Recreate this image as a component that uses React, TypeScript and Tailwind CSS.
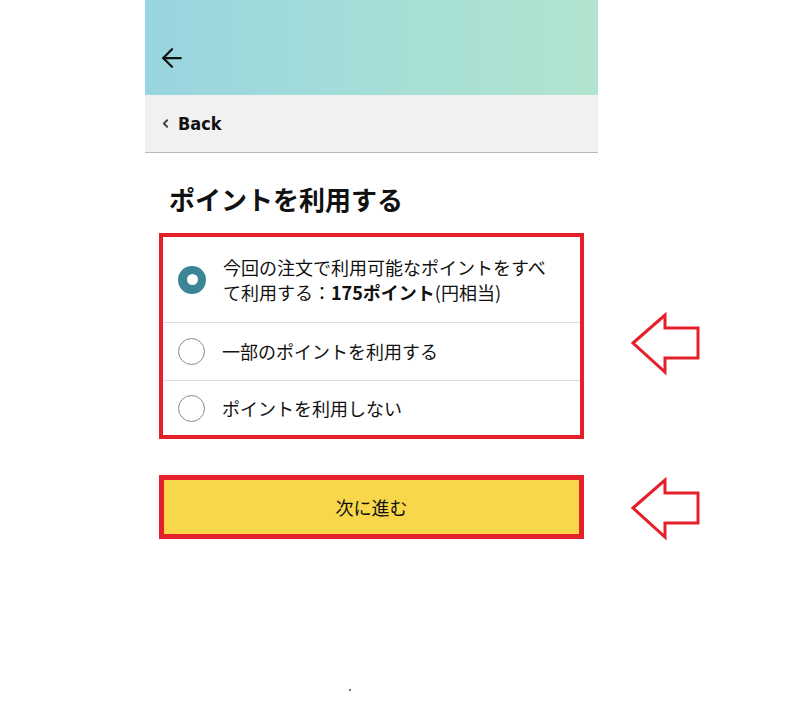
import { ArrowLeft, ChevronLeft } from "lucide-react";
import * as React from "react";

const jp = { fontFamily: '"Noto Sans CJK JP", "Noto Sans", sans-serif' };

const options = [
  {
    id: "all",
    label: (
      <>
        今回の注文で利用可能なポイントをすべて利用する：
        <span className="font-bold">175ポイント</span>(円相当)
      </>
    ),
    h: "h-[85px]",
  },
  { id: "some", label: "一部のポイントを利用する", h: "h-[58px]" },
  { id: "none", label: "ポイントを利用しない", h: "h-[55px]" },
];

const Radio: React.FC<{ checked: boolean }> = ({ checked }) =>
  checked ? (
    <span className="flex h-[28px] w-[28px] shrink-0 items-center justify-center rounded-full bg-[#3b8696]">
      <span className="h-[11px] w-[11px] rounded-full bg-white" />
    </span>
  ) : (
    <span className="h-[27px] w-[27px] shrink-0 rounded-full border-[1.5px] border-[#8a8a8a] bg-white" />
  );

const HintArrow: React.FC<{ top: string }> = ({ top }) => (
  <svg
    className={`absolute left-[630px] ${top}`}
    width="74"
    height="64"
    viewBox="0 0 74 64"
    fill="none"
  >
    <path
      d="M3 31 L35 3 L35 16 L68 16 L68 46 L35 46 L35 60 Z"
      stroke="#e5202a"
      strokeWidth="3"
      strokeLinejoin="miter"
    />
  </svg>
);

export default function App() {
  const [selected, setSelected] = React.useState("all");

  return (
    <div className="relative h-[712px] w-[800px] overflow-hidden bg-white" style={jp}>
      <div className="ml-[145px] w-[453px]">
        {/* top bar */}
        <div className="h-[95px] bg-gradient-to-r from-[#99d5e0] to-[#b1e5cf] pl-[12px] pt-[43px]">
          <ArrowLeft size={30} strokeWidth={1.8} className="text-[#111]" />
        </div>

        {/* back link */}
        <div className="flex h-[58px] items-center border-b border-[#b9b9b9] bg-[#f1f1f1] pl-[14px]">
          <ChevronLeft size={13} strokeWidth={3.5} className="text-[#444]" />
          <span
            className="ml-[6px] text-[18px] font-bold text-[#111]"
            style={{ fontFamily: '"DejaVu Sans Condensed", "Liberation Sans", sans-serif' }}
          >
            Back
          </span>
        </div>

        <h1 className="mt-[28px] pl-[24px] text-[26px] font-bold leading-[36px] text-[#111]">
          ポイントを利用する
        </h1>

        {/* options */}
        <div className="mx-[14px] mt-[16px] border-4 border-[#e5202a] bg-white">
          {options.map((o, i) => (
            <div
              key={o.id}
              onClick={() => setSelected(o.id)}
              className={`flex ${o.h} cursor-pointer items-center gap-[17px] pl-[15px] pr-[20px] ${
                i > 0 ? "border-t border-[#dedede]" : ""
              }`}
            >
              <Radio checked={selected === o.id} />
              <p className="text-[18px] leading-[25px] text-[#111]">{o.label}</p>
            </div>
          ))}
        </div>

        {/* next */}
        <div className="mx-[14px] mt-[36px] border-[5px] border-[#e5202a]">
          <button className="flex h-[54px] w-full items-center justify-center bg-[#f8d74b] text-[18px] text-[#111]">
            次に進む
          </button>
        </div>
      </div>

      <HintArrow top="top-[312px]" />
      <HintArrow top="top-[477px]" />
      <span className="absolute left-[349px] top-[689px] h-[2px] w-[2px] bg-[#777]" />
    </div>
  );
}
